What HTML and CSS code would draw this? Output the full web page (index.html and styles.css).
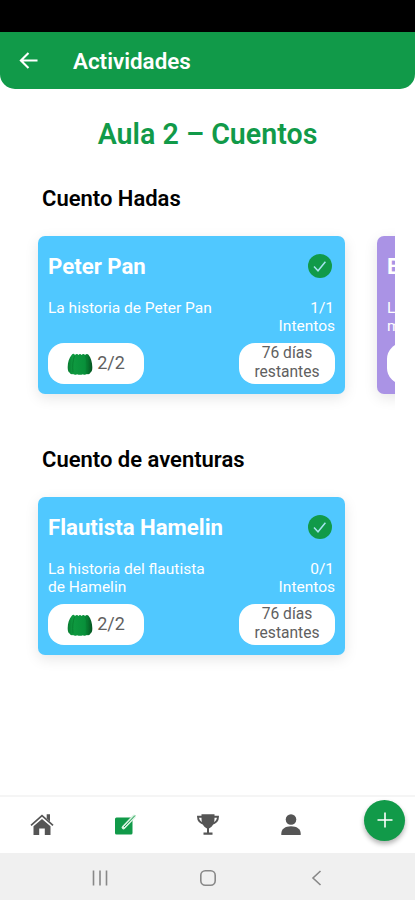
FILE: index.html
```html
<!DOCTYPE html>
<html lang="es">
<head>
    <meta charset="UTF-8">
    <meta name="viewport" content="width=device-width, initial-scale=1.0">
    <title>Actividades</title>
    <link rel="stylesheet" href="styles.css">
</head>
<body>

<!-- Shared icons -->
<svg class="sprite" aria-hidden="true">
    <defs>
        <linearGradient id="bagShade">
            <stop offset="0" stop-color="#087a30"/>
            <stop offset="0.2" stop-color="#0f9a40"/>
            <stop offset="0.7" stop-color="#08903a"/>
            <stop offset="1" stop-color="#04521f"/>
        </linearGradient>
        <symbol id="check" viewBox="0 0 24 24">
            <circle cx="12" cy="12" r="12" fill="#119a49"/>
            <path d="M6 12.600l4 4.200 7.400-9" fill="none" stroke="#a5e3ee" stroke-width="1.500"/>
        </symbol>
        <symbol id="bag" viewBox="0 0 26 22">
            <path d="M5 1.500Q6.500 0 8 2Q10 -0.200 11.500 2Q13 0 14.500 2Q16.500 -0.200 18 2Q20 0 21.500 1.800C24 5 25.200 9 25.300 14Q25.500 18.500 23.500 19.500Q22.500 22 20 21Q17.500 22.500 16 21.200Q13 22.200 10 21.200Q8 22.500 6 21Q3.500 22 2.500 19.500Q0.600 18.500 0.700 14C0.800 9 2 5 5 1.500Z" fill="url(#bagShade)"/>
            <path d="M7.500 3Q5 9 6 19.500M18.500 3Q21 9 20 19.500" fill="none" stroke="#067a2e" stroke-width="0.800"/>
        </symbol>
    </defs>
</svg>

<div class="status-bar"></div>

<header class="app-bar">
    <svg class="back" viewBox="0 0 20 20"><path d="M19.500 10H2M10 2L2 10l8 8" fill="none" stroke="#fff" stroke-width="2.200"/></svg>
    <span>Actividades</span>
</header>

<main class="content">
    <h1>Aula 2 – Cuentos</h1>

    <section class="group">
        <h2>Cuento Hadas</h2>
        <div class="card-list">
            <article class="card">
                <div class="card-header">
                    <h3>Peter Pan</h3>
                    <svg class="check"><use href="#check"/></svg>
                </div>
                <div class="card-info">
                    <p class="description">La historia de Peter Pan</p>
                    <p class="attempts"><span>1/1</span><br>Intentos</p>
                </div>
                <div class="card-footer">
                    <div class="pill score"><svg class="bag"><use href="#bag"/></svg>2/2</div>
                    <div class="pill days">76 días<br>restantes</div>
                </div>
            </article>
            <article class="card purple">
                <div class="card-header">
                    <h3>B</h3>
                </div>
                <div class="card-info">
                    <p class="description">L<br>m</p>
                </div>
                <div class="card-footer">
                    <div class="pill"></div>
                </div>
            </article>
        </div>
    </section>

    <section class="group">
        <h2>Cuento de aventuras</h2>
        <div class="card-list">
            <article class="card">
                <div class="card-header">
                    <h3>Flautista Hamelin</h3>
                    <svg class="check"><use href="#check"/></svg>
                </div>
                <div class="card-info">
                    <p class="description">La historia del flautista de Hamelin</p>
                    <p class="attempts"><span>0/1</span><br>Intentos</p>
                </div>
                <div class="card-footer">
                    <div class="pill score"><svg class="bag"><use href="#bag"/></svg>2/2</div>
                    <div class="pill days">76 días<br>restantes</div>
                </div>
            </article>
        </div>
    </section>
</main>

<nav class="tab-bar">
    <a class="tab"><svg viewBox="0 0 24 24">
        <path d="M3.500 13.200L12 6l8.500 7.200V22H14.800v-6.500H9.200V22H3.500z"/>
        <path d="M1 12.300L12 2.600l11 9.700" fill="none" stroke="currentColor" stroke-width="1.700"/>
        <path d="M16.700 1.300h3.300v7.200l-3.300-3z"/>
    </svg></a>
    <a class="tab active"><svg viewBox="0 0 24 24">
        <rect x="2" y="4.500" width="17.500" height="17" rx="1.500"/>
        <path d="M10.500 14.500L21 3.500" stroke="#d9f2e1" stroke-width="3.800" stroke-linecap="round"/>
        <path d="M11 14L22 2.500" stroke="currentColor" stroke-width="1"/>
    </svg></a>
    <a class="tab"><svg viewBox="0 0 24 24">
        <path d="M5.500 1.300h13v4c0 5.500-2.200 8.700-5.500 10.200v4h3.500v2.200h-9v-2.200H11v-4C7.700 14 5.500 10.800 5.500 5.300z"/>
        <path d="M6.500 3.800H2c0 3.500 1.800 6.200 6.500 7.400M17.500 3.800H22c0 3.500-1.800 6.200-6.500 7.400" fill="none" stroke="currentColor" stroke-width="1.900"/>
    </svg></a>
    <a class="tab"><svg viewBox="0 0 24 24">
        <circle cx="12" cy="6.500" r="5.300"/>
        <path d="M2.300 22v-1.500c0-4.500 4-7.300 9.700-7.300s9.700 2.800 9.700 7.300V22z"/>
    </svg></a>
    <button class="fab" aria-label="Añadir"><svg viewBox="0 0 16 16"><path d="M8 0.500v15M0.500 8h15" stroke="#fff" stroke-width="1.600"/></svg></button>
</nav>

<footer class="system-bar">
    <svg viewBox="0 0 16 16"><path d="M1.500 0.500v15M8 0.500v15M14.500 0.500v15"/></svg>
    <svg viewBox="0 0 16 16"><rect x="0.800" y="0.800" width="14.400" height="14.400" rx="4.500"/></svg>
    <svg viewBox="0 0 16 16"><path d="M12.500 1L5 8l7.500 7"/></svg>
</footer>

</body>
</html>
```
FILE: styles.css
```css
* {
    box-sizing: border-box;
}
body {
    margin: 0;
    height: 900px;
    display: flex;
    flex-direction: column;
    overflow: hidden;
    font-family: Roboto, sans-serif;
    background-color: #fff;
    color: #000;
}
h1, h2, h3, p {
    margin: 0;
}
.sprite {
    position: absolute;
    width: 0;
    height: 0;
}
.status-bar {
    height: 32px;
    background-color: #000;
}
.app-bar {
    display: flex;
    align-items: center;
    gap: 35px;
    height: 57px;
    padding-left: 19px;
    border-radius: 0 0 15px 15px;
    background-color: #119a49;
    color: #fff;
    font-size: 22.400px;
    font-weight: 600;
}
.back {
    width: 19px;
    height: 19px;
}
.content {
    flex: 1;
    padding: 25px 20px 0;
}
h1 {
    height: 41px;
    line-height: 41px;
    text-align: center;
    font-size: 28.600px;
    font-weight: 600;
    color: #119a49;
}
.group {
    height: 261px;
    padding-top: 29px;
}
h2 {
    padding-left: 22px;
    line-height: 30px;
    font-size: 22px;
    font-weight: 600;
}
.card-list {
    display: flex;
    gap: 32px;
    padding: 22px 0 25px 18px;
    overflow: hidden;
}
.card {
    flex: none;
    width: 307px;
    height: 158px;
    padding: 10px;
    border-radius: 7px;
    background-color: #50c8ff;
    color: #fff;
    box-shadow: 0 4px 14px rgba(0, 0, 0, 0.1);
}
.purple {
    background-color: #aa93e5;
}
.card-header {
    display: flex;
    justify-content: space-between;
    align-items: center;
    height: 40px;
    padding-right: 3px;
}
h3 {
    font-size: 22.200px;
    font-weight: 700;
}
.check {
    width: 24px;
    height: 24px;
}
.card-info {
    display: flex;
    justify-content: space-between;
    height: 57px;
    padding-top: 13px;
    font-size: 15.500px;
    line-height: 18px;
}
.description {
    width: 170px;
}
.attempts {
    text-align: right;
}
.attempts span {
    padding-right: 1px;
}
.card-footer {
    display: flex;
    justify-content: space-between;
}
.pill {
    display: flex;
    align-items: center;
    justify-content: center;
    width: 96px;
    height: 41px;
    border-radius: 16px;
    background-color: #fff;
    color: #606060;
}
.score {
    gap: 4px;
    padding-bottom: 3px;
    font-size: 18px;
}
.bag {
    width: 26px;
    height: 22px;
    margin-top: 3px;
}
.days {
    padding-bottom: 2px;
    text-align: center;
    font-size: 15.600px;
    line-height: 18.500px;
}
.tab-bar {
    display: flex;
    align-items: center;
    height: 58px;
    border-top: 2px solid #f5f5f5;
}
.tab {
    display: flex;
    justify-content: center;
    width: 83px;
    color: #555;
}
.tab svg {
    width: 24px;
    height: 24px;
    fill: currentColor;
}
.tab.active {
    color: #119a49;
}
.fab {
    display: flex;
    align-items: center;
    justify-content: center;
    width: 41px;
    height: 41px;
    margin: 0 0 10px 32px;
    padding: 0;
    border: none;
    border-radius: 50%;
    background-color: #119a49;
    box-shadow: 0 3px 5px rgba(0, 0, 0, 0.3);
}
.fab svg {
    width: 16px;
    height: 16px;
}
.system-bar {
    display: flex;
    align-items: center;
    justify-content: center;
    gap: 92px;
    height: 47px;
    padding-top: 2px;
    background-color: #f0f0f0;
}
.system-bar svg {
    width: 16px;
    height: 16px;
    fill: none;
    stroke: #888;
    stroke-width: 1.600;
}
```
